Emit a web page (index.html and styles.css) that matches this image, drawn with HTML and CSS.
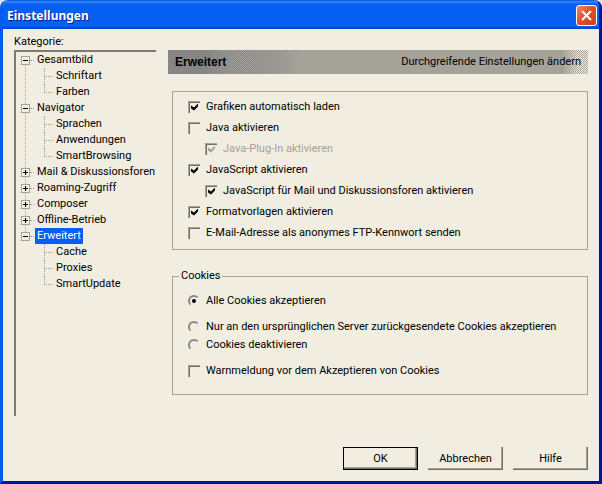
FILE: index.html
```html
<!DOCTYPE html>
<html lang="de">
<head>
    <meta charset="UTF-8">
    <title>Einstellungen</title>
    <link rel="stylesheet" href="styles.css">
</head>
<body>
<form class="window">
    <header class="titlebar">
        <h1>Einstellungen</h1>
        <button type="button" class="close" aria-label="Schließen">
            <svg width="19" height="19" viewBox="0 0 19 19">
                <path d="M5 5L14 14M14 5L5 14" stroke="#fff" stroke-width="2" fill="none"/>
            </svg>
        </button>
    </header>
    <div class="main">
        <nav class="category">
            <h2 id="category-title">Kategorie:</h2>
            <ul class="tree" aria-labelledby="category-title">
                <li class="node">
                    <button type="button" class="toggle" aria-label="Gesamtbild zuklappen"></button>
                    <a href="#">Gesamtbild</a>
                    <ul class="sub">
                        <li><a href="#">Schriftart</a></li>
                        <li><a href="#">Farben</a></li>
                    </ul>
                </li>
                <li class="node">
                    <button type="button" class="toggle" aria-label="Navigator zuklappen"></button>
                    <a href="#">Navigator</a>
                    <ul class="sub">
                        <li><a href="#">Sprachen</a></li>
                        <li><a href="#">Anwendungen</a></li>
                        <li><a href="#">SmartBrowsing</a></li>
                    </ul>
                </li>
                <li class="node">
                    <button type="button" class="toggle plus" aria-label="Mail &amp; Diskussionsforen aufklappen"></button>
                    <a href="#">Mail &amp; Diskussionsforen</a>
                </li>
                <li class="node">
                    <button type="button" class="toggle plus" aria-label="Roaming-Zugriff aufklappen"></button>
                    <a href="#">Roaming-Zugriff</a>
                </li>
                <li class="node">
                    <button type="button" class="toggle plus" aria-label="Composer aufklappen"></button>
                    <a href="#">Composer</a>
                </li>
                <li class="node">
                    <button type="button" class="toggle plus" aria-label="Offline-Betrieb aufklappen"></button>
                    <a href="#">Offline-Betrieb</a>
                </li>
                <li class="node">
                    <button type="button" class="toggle" aria-label="Erweitert zuklappen"></button>
                    <a href="#" class="active">Erweitert</a>
                    <ul class="sub">
                        <li><a href="#">Cache</a></li>
                        <li><a href="#">Proxies</a></li>
                        <li><a href="#">SmartUpdate</a></li>
                    </ul>
                </li>
            </ul>
        </nav>
        <div class="panel">
            <div class="banner">
                <h2>Erweitert</h2>
                <p>Durchgreifende Einstellungen ändern</p>
            </div>
            <fieldset class="group options">
                <label><input type="checkbox" checked>Grafiken automatisch laden</label>
                <label><input type="checkbox">Java aktivieren</label>
                <label class="indent disabled"><input type="checkbox" checked disabled>Java-Plug-In aktivieren</label>
                <label><input type="checkbox" checked>JavaScript aktivieren</label>
                <label class="indent"><input type="checkbox" checked>JavaScript für Mail und Diskussionsforen aktivieren</label>
                <label><input type="checkbox" checked>Formatvorlagen aktivieren</label>
                <label><input type="checkbox">E-Mail-Adresse als anonymes FTP-Kennwort senden</label>
            </fieldset>
            <fieldset class="group cookies">
                <legend>Cookies</legend>
                <label class="spaced"><input type="radio" name="cookies" checked>Alle Cookies akzeptieren</label>
                <label><input type="radio" name="cookies">Nur an den ursprünglichen Server zurückgesendete Cookies akzeptieren</label>
                <label class="spaced"><input type="radio" name="cookies">Cookies deaktivieren</label>
                <label><input type="checkbox">Warnmeldung vor dem Akzeptieren von Cookies</label>
            </fieldset>
        </div>
    </div>
    <footer class="buttons">
        <button type="submit" class="btn default">OK</button>
        <button type="button" class="btn">Abbrechen</button>
        <button type="button" class="btn">Hilfe</button>
    </footer>
</form>
</body>
</html>
```
FILE: styles.css
```css
*{
    box-sizing: border-box;
    margin: 0;
    padding: 0;
}
body{
    background-color: #dce6f2;
    color: #000;
    font: 11px/16px Roboto, Arial, sans-serif;
}
button, input{
    font: inherit;
    color: inherit;
}
ul{
    list-style: none;
}
a{
    color: inherit;
    text-decoration: none;
}
.window{
    display: flex;
    flex-direction: column;
    min-height: 100vh;
    background-color: #f1ede1;
    border: 3px solid #00149c;
    border-top: 0;
    border-left-color: #0359f0;
    border-radius: 8px 8px 0 0;
    overflow: hidden;
}

/* title bar */
.titlebar{
    display: flex;
    align-items: center;
    justify-content: space-between;
    height: 29px;
    margin: 0 -3px;
    padding: 2px 5px 0 7px;
    background: linear-gradient(#0a50dc 0, #3089ff 2px, #0560f2 4px, #0560f2 26px, #003cd2 29px);
}
.titlebar h1{
    color: #fff;
    font: bold 12px/20px "Noto Sans", sans-serif;
    text-shadow: 1px 1px #0a1f8c;
}
.close{
    width: 21px;
    height: 21px;
    border: 1px solid #fff;
    border-radius: 3px;
    background: linear-gradient(135deg, #ee8a6a, #e0512b 45%, #c8401c);
}
.close svg{
    display: block;
}

.main{
    display: flex;
    flex: 1;
    gap: 12px;
    padding: 4px 11px 0;
}

/* category tree */
.category{
    display: flex;
    flex-direction: column;
    width: 142px;
}
.category h2{
    font-size: 11px;
    font-weight: normal;
    line-height: 17px;
}
.tree{
    height: 366px;
    padding-left: 5px;
    border-left: 2px solid #7c7a72;
    border-top: 2px solid #7c7a72;
    white-space: nowrap;
}
.node, .sub li{
    position: relative;
}
.node{
    padding-left: 14px;
}
.node::before{
    content: "";
    position: absolute;
    left: 4px;
    top: 8px;
    height: 100%;
    border-left: 1px dotted #a5a29a;
}
.node:last-child::before{
    display: none;
}
.node::after, .sub li::after{
    content: "";
    position: absolute;
    left: 9px;
    top: 8px;
    width: 4px;
    border-top: 1px dotted #a5a29a;
}
.node a{
    display: inline-block;
    height: 16px;
    padding: 0 2px;
    vertical-align: top;
}
.node a.active{
    background-color: #0560f2;
    color: #fff;
}
.toggle{
    position: absolute;
    left: 0;
    top: 4px;
    z-index: 1;
    width: 9px;
    height: 9px;
    border: 1px solid #a5a29a;
    background: linear-gradient(#000, #000) center / 5px 1px no-repeat #f1ede1;
}
.toggle.plus{
    background: linear-gradient(#000, #000) center / 5px 1px no-repeat,
                linear-gradient(#000, #000) center / 1px 5px no-repeat #f1ede1;
}
.sub li{
    padding-left: 19px;
}
.sub li::before{
    content: "";
    position: absolute;
    left: 9px;
    top: 0;
    height: 16px;
    border-left: 1px dotted #a5a29a;
}
.sub li:last-child::before{
    height: 8px;
}
.sub li::after{
    width: 9px;
}

/* settings */
.panel{
    flex: 1;
    padding-top: 17px;
}
.banner{
    position: relative;
    z-index: 0;
    display: flex;
    align-items: center;
    justify-content: space-between;
    height: 24px;
    padding: 0 7px;
    background: linear-gradient(90deg, #868686 40px, #a5a29a 130px);
}
.banner::before, .banner::after{
    content: "";
    position: absolute;
    z-index: -1;
    top: 0;
    bottom: 0;
}
.banner::before{
    left: 36px;
    width: 98px;
    background: conic-gradient(#868686 25%, #a5a29a 0 50%, #868686 0 75%, #a5a29a 0) 0 0 / 2px 2px;
    mask-image: linear-gradient(90deg, transparent, #000 40%, transparent);
}
.banner::after{
    right: 0;
    width: 26px;
    background: conic-gradient(#f1ede1 25%, #a5a29a 0 50%, #f1ede1 0 75%, #a5a29a 0) 0 0 / 2px 2px;
    mask-image: linear-gradient(90deg, transparent, #000 60%);
}
.banner h2{
    font: bold 12px/16px "Liberation Sans", Arial, sans-serif;
}
.group{
    display: flex;
    flex-direction: column;
    margin-left: 4px;
    padding-left: 15px;
    border: 1px solid #a5a29a;
}
.options{
    margin-top: 17px;
    padding-top: 4px;
    padding-bottom: 6px;
}
.options label{
    height: 21px;
}
.cookies{
    margin-top: 18px;
    padding-top: 8px;
    padding-bottom: 14px;
}
.cookies label{
    height: 18px;
}
.cookies .spaced{
    margin-bottom: 8px;
}
legend{
    margin-left: -9px;
    padding: 0 2px;
}
label{
    display: flex;
    align-items: center;
    gap: 6px;
}
.indent{
    padding-left: 17px;
}
.disabled{
    color: #a5a29a;
}
input{
    appearance: none;
    flex: none;
    display: grid;
    width: 12px;
    height: 12px;
    border: 0 solid #a5a29a;
    border-width: 1px 0 0 1px;
}
input[type="checkbox"]{
    box-shadow: inset 1px 1px #716f64;
}
input[type="checkbox"]:checked::after{
    content: "";
    width: 7px;
    height: 7px;
    margin: 2px 0 0 2px;
    background-color: #000;
    clip-path: polygon(0 2px, 3px 4px, 7px 0, 7px 3px, 3px 7px, 0 5px);
}
input:disabled:checked::after{
    background-color: #a5a29a;
}
input[type="radio"]{
    border: 2px solid;
    border-color: #8a887f transparent transparent #8a887f;
    border-radius: 50%;
}
input[type="radio"]:checked::after{
    content: "";
    width: 4px;
    height: 4px;
    margin: 2px;
    border-radius: 50%;
    background-color: #000;
}

.buttons{
    display: flex;
    justify-content: flex-end;
    gap: 10px;
    padding: 0 11px 11px;
}
.btn{
    width: 75px;
    height: 23px;
    border: 0;
    background-color: #f1ede1;
    box-shadow: inset -1px -1px #716f64, inset -2px -2px #a5a29a;
}
.btn.default{
    border: 1px solid #000;
}
```
